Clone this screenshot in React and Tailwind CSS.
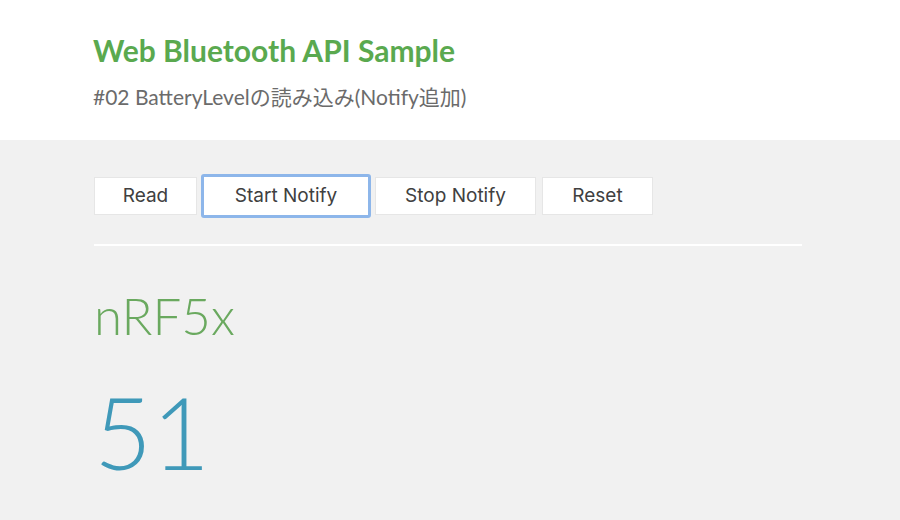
import React from 'react';

const buttons = [
  { label: 'Read', width: 'w-[103px]' },
  { label: 'Start Notify', width: 'w-[170px]' },
  { label: 'Stop Notify', width: 'w-[161px]' },
  { label: 'Reset', width: 'w-[111px] ml-[2px]' },
];

export default function App() {
  return (
    <div className="min-h-[520px] bg-[#f1f1f1] font-['Lato','Noto_Sans_CJK_JP',sans-serif]">
      <header className="bg-white h-[140px] pl-[93px] pt-[32px]">
        <h1 className="text-[30px] font-bold text-[#5aa94f] leading-[36px]">Web Bluetooth API Sample</h1>
        <p className="mt-[17px] text-[21px] text-[#6b6b6b] leading-[24px]">#02 BatteryLevelの読み込み(Notify追加)</p>
      </header>

      <main className="pl-[94px] pt-[34px]">
        <div className="flex items-center gap-[4px] h-[44px]">
          {buttons.map((b, i) => (
            <button
              key={b.label}
              className={`${b.width} bg-white text-[19px] text-[#404040] font-['Inter',sans-serif] font-normal ${
                i === 1
                  ? 'h-[44px] border-[3px] border-[#8db6ea] rounded-[3px]'
                  : 'h-[38px] border border-[#e6e6e6]'
              }`}
            >
              {b.label}
            </button>
          ))}
        </div>

        <div className="w-[708px] h-[2px] bg-white mt-[26px]" />

        <h2 className="mt-[40px] text-[51px] font-light text-[#6aa95f] leading-[60px]">nRF5x</h2>
        <div className="mt-[35px] text-[100px] font-light text-[#3f99b9] leading-[100px]">51</div>
      </main>
    </div>
  );
}
